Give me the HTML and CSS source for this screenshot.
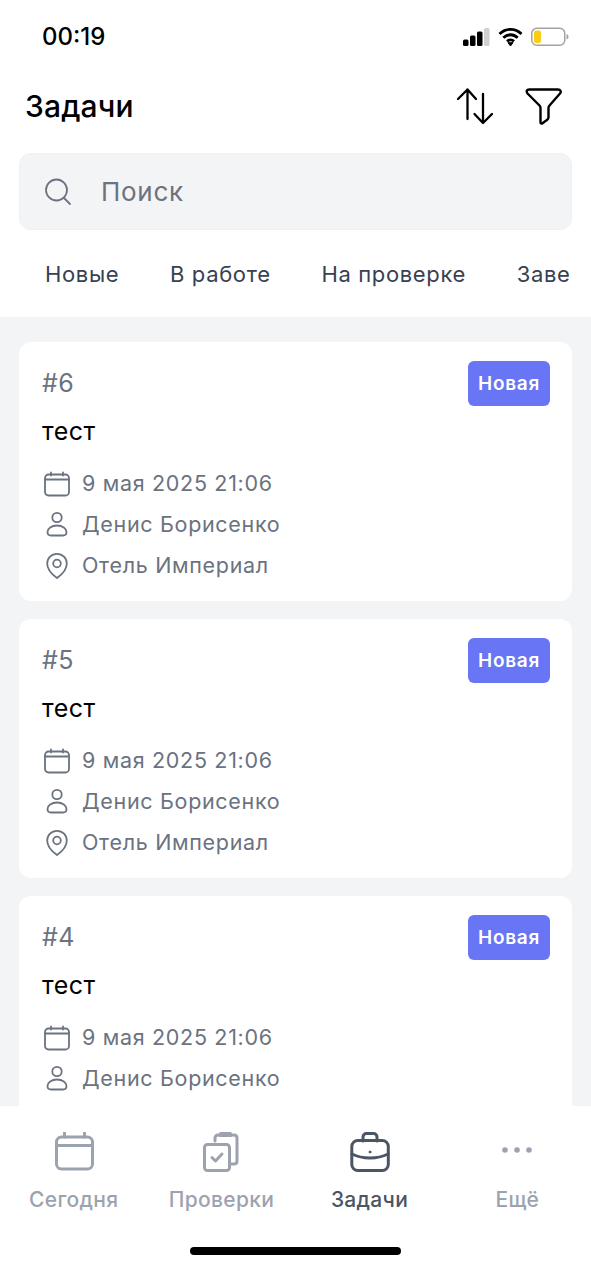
FILE: index.html
```html
<!DOCTYPE html>
<html lang="ru">
<head>
<meta charset="utf-8">
<title>Задачи</title>
<link rel="stylesheet" href="styles.css">
</head>
<body>
<div class="app">
  <header class="top">
    <div class="status">
      <span class="time">00:19</span>
      <div class="status-icons">
        <svg width="27" height="20" viewBox="0 0 27 20"><rect x="0" y="12.500" width="5.500" height="6.500" rx="1.500" fill="#000"/><rect x="7" y="8.500" width="5.500" height="10.500" rx="1.500" fill="#000"/><rect x="14" y="4.500" width="5.500" height="14.500" rx="1.500" fill="#000"/><rect x="21" y="1" width="5.500" height="18" rx="1.500" fill="#d0d0d0"/></svg>
        <svg width="25" height="20" viewBox="0 0 25 20"><path d="M1.500 7C7.700 .8 17.300 .8 23.500 7M5.300 10.800C9.600 6.800 15.400 6.800 19.700 10.800M9 14.400C11 12.600 14 12.600 16 14.400" fill="none" stroke="#000" stroke-width="2.900"/><path d="M12.500 19l-2.500-3.300h5z" fill="#000" stroke="#000" stroke-width="1"/></svg>
        <svg width="38" height="20" viewBox="0 0 38 20"><rect x=".75" y="1.250" width="33" height="17" rx="5" fill="#fff" stroke="#a3a3a3" stroke-width="1.500"/><rect x="3" y="3.500" width="7" height="12.500" rx="2" fill="#f9cc16"/><path d="M35.500 7c1.300.4 2 1.500 2 2.700s-.7 2.300-2 2.700z" fill="#a3a3a3"/></svg>
      </div>
    </div>
    <div class="titlebar">
      <h1>Задачи</h1>
      <div class="actions">
        <svg width="38" height="38" viewBox="0 0 38 38" fill="none" stroke="#000" stroke-width="2.300" stroke-linecap="round" stroke-linejoin="round"><path d="M11.500 32V2.500M2 12l9.500-9.500L20 12"/><path d="M27 7v29M18.500 27l8.500 9 9-9"/></svg>
        <svg width="38" height="38" viewBox="0 0 38 38" fill="none" stroke="#000" stroke-width="2.400" stroke-linecap="round" stroke-linejoin="round"><path d="M4 2.500h29c2.500 0 3.500 2 2 4L24.500 18.500c-.7.800-1 1.500-1 2.500v9.500c0 1.500-1 2-2 2.800l-4 3c-1 .7-2 .2-2-1V21c0-1-.3-1.700-1-2.500L2.500 6.500C1 4.500 1.800 2.500 4 2.500z"/></svg>
      </div>
    </div>
    <div class="search">
      <svg width="28" height="28" viewBox="0 0 28 28" fill="none" stroke="#6b7280" stroke-width="1.800" stroke-linecap="round"><circle cx="12.500" cy="12" r="10.500"/><path d="M20 20l6 6"/></svg>
      <span class="search-text">Поиск</span>
    </div>
    <nav class="tabs">
      <span class="tab">Новые</span>
      <span class="tab">В работе</span>
      <span class="tab">На проверке</span>
      <span class="tab">Завершённые</span>
    </nav>
  </header>

  <main class="list">
    <article class="card">
      <div class="card-head"><span class="num">#6</span><span class="badge">Новая</span></div>
      <div class="name">тест</div>
      <div class="meta">
        <div class="row"><svg class="ic"><use href="#i-cal"/></svg>9 мая 2025 21:06</div>
        <div class="row"><svg class="ic"><use href="#i-user"/></svg>Денис Борисенко</div>
        <div class="row"><svg class="ic"><use href="#i-pin"/></svg>Отель Империал</div>
      </div>
    </article>
    <article class="card">
      <div class="card-head"><span class="num">#5</span><span class="badge">Новая</span></div>
      <div class="name">тест</div>
      <div class="meta">
        <div class="row"><svg class="ic"><use href="#i-cal"/></svg>9 мая 2025 21:06</div>
        <div class="row"><svg class="ic"><use href="#i-user"/></svg>Денис Борисенко</div>
        <div class="row"><svg class="ic"><use href="#i-pin"/></svg>Отель Империал</div>
      </div>
    </article>
    <article class="card">
      <div class="card-head"><span class="num">#4</span><span class="badge">Новая</span></div>
      <div class="name">тест</div>
      <div class="meta">
        <div class="row"><svg class="ic"><use href="#i-cal"/></svg>9 мая 2025 21:06</div>
        <div class="row"><svg class="ic"><use href="#i-user"/></svg>Денис Борисенко</div>
        <div class="row"><svg class="ic"><use href="#i-pin"/></svg>Отель Империал</div>
      </div>
    </article>
  </main>

  <footer class="bar">
    <div class="nav">
      <div class="item">
        <svg width="40" height="40" viewBox="0 0 40 40" fill="none" stroke="#9ca3af" stroke-width="3" stroke-linecap="round" stroke-linejoin="round"><rect x="2.500" y="5" width="36" height="32" rx="5"/><path d="M2.500 13.500h36M10.500 1v4M30.500 1v4"/></svg>
        <span>Сегодня</span>
      </div>
      <div class="item">
        <svg width="40" height="40" viewBox="0 0 40 40" fill="none" stroke="#9ca3af" stroke-width="3" stroke-linecap="round" stroke-linejoin="round"><path d="M13 9V6c0-1.700 1.300-3 3-3h2c.5-2 2-2.500 4-2.500h3c2 0 3.500.5 4 2.500h3c2 0 3 1.500 3 3v23c0 2-1.500 3-3 3h-4"/><path d="M18 3.500h11"/><rect x="2.500" y="12.500" width="25" height="26" rx="3"/><path d="M10 25.500l3.500 3.500 6.500-7"/></svg>
        <span>Проверки</span>
      </div>
      <div class="item active">
        <svg width="40" height="40" viewBox="0 0 40 40" fill="none" stroke="#4b5563" stroke-width="3" stroke-linecap="round" stroke-linejoin="round"><path d="M13 9V5c0-2 1.500-3.500 3.500-3.500h7c2 0 3.500 1.500 3.500 3.500v4"/><rect x="1.800" y="8.500" width="36.500" height="30" rx="6"/><path d="M2 22c5 2.500 11 4 18 4s13-1.500 18-4"/><circle cx="20" cy="20" r="1" fill="#4b5563" stroke-width="1"/></svg>
        <span>Задачи</span>
      </div>
      <div class="item muted">
        <svg width="40" height="40" viewBox="0 0 40 40" fill="#9ca3af"><circle cx="8" cy="18" r="2.800"/><circle cx="20" cy="18" r="2.800"/><circle cx="32" cy="18" r="2.800"/></svg>
        <span>Ещё</span>
      </div>
    </div>
    <div class="home"></div>
  </footer>
</div>

<svg class="defs" width="0" height="0" aria-hidden="true">
  <symbol id="i-cal" viewBox="0 0 26 28"><g fill="none" stroke="#6b7280" stroke-width="1.800" stroke-linecap="round" stroke-linejoin="round"><rect x="1" y="5.500" width="24" height="21" rx="3.500"/><path d="M1 10.500h24M7 3.500v3M19 3.500v3"/></g></symbol>
  <symbol id="i-user" viewBox="0 0 26 28"><g fill="none" stroke="#6b7280" stroke-width="1.800"><circle cx="13" cy="7.500" r="4.700"/><path d="M13 15.500c-5.500 0-9.500 3-9.500 6.500 0 2.200 1.500 3.500 3.500 3.500h12c2 0 3.500-1.300 3.500-3.500 0-3.500-4-6.500-9.500-6.500z"/></g></symbol>
  <symbol id="i-pin" viewBox="0 0 26 28"><g fill="none" stroke="#6b7280" stroke-width="1.800" stroke-linejoin="round"><path d="M13 2.800C7.500 2.800 3.200 7 3.200 12.500 3.200 18 8 23.500 13 27c5-3.500 9.800-9 9.800-14.500C22.800 7 18.500 2.800 13 2.800z"/><circle cx="13" cy="12.500" r="3.800"/></g></symbol>
</svg>
</body>
</html>
```
FILE: styles.css
```css
* { box-sizing: border-box; }
html, body { margin: 0; padding: 0; height: 100%; }
body { font-family: Inter, "Noto Sans", sans-serif; background: #f3f4f6; overflow: hidden; }
.defs { display: block; height: 0; }
.app { width: 591px; height: 1280px; display: flex; flex-direction: column; overflow: hidden; }

.top { background: #fff; height: 317px; flex: none; display: flex; flex-direction: column; }
.status { height: 72px; padding: 0 22px 0 42px; display: flex; align-items: center; justify-content: space-between; }
.time { font-size: 24px; font-weight: 500; color: #000; }
.status-icons { display: flex; align-items: center; gap: 8px; margin-top: 2px; }

.titlebar { height: 68px; padding: 0 28px 0 25px; display: flex; align-items: center; justify-content: space-between; }
h1 { margin: 0; font-size: 30px; font-weight: 500; color: #000; letter-spacing: .15px; }
.actions { display: flex; gap: 31px; }

.search { margin: 13px 19px 0; height: 77px; flex: none; background: #f3f4f6; border: 1px solid #eef0f2; border-radius: 12px; padding: 0 0 0 24px; display: flex; align-items: center; gap: 29px; }
.search-text { font-size: 26px; color: #6b7280; letter-spacing: .7px; }

.tabs { margin: 18px 21px 0 19px; height: 52px; padding-left: 26px; display: flex; align-items: center; gap: 50.700px; overflow: hidden; white-space: nowrap; }
.tab { font-size: 22px; color: #374151; letter-spacing: .65px; flex: none; }

.list { flex: 1; min-height: 0; overflow: hidden; padding: 25px 19px 0; display: flex; flex-direction: column; gap: 18.500px; }
.card { flex: none; height: 258.500px; background: #fff; border-radius: 12px; padding: 19px 22px 0 23px; }
.card-head { display: flex; justify-content: space-between; align-items: center; height: 45px; }
.num { font-size: 25px; color: #6b7280; letter-spacing: .5px; padding-bottom: 2px; }
.badge { width: 82px; height: 45.500px; background: #6875f5; color: #fff; border-radius: 6px; font-size: 19px; font-weight: 600; letter-spacing: .7px; display: flex; align-items: center; justify-content: center; }
.name { font-size: 25px; color: #000; margin-top: 6.500px; line-height: 36px; letter-spacing: .5px; }
.meta { margin-top: 14px; }
.row { height: 41px; display: flex; align-items: center; gap: 12px; font-size: 21.500px; color: #6b7280; letter-spacing: .68px; }
.ic { width: 26px; height: 28px; flex: none; margin-left: 2px; }

.bar { height: 174px; flex: none; background: #fff; position: relative; z-index: 1; display: flex; flex-direction: column; }
.nav { display: grid; grid-template-columns: 147.500px 148px 148px 147.500px; padding-top: 26px; }
.item { display: flex; flex-direction: column; align-items: center; gap: 15px; font-size: 21px; font-weight: 500; color: #9ca3af; letter-spacing: .3px; }
.item svg { display: block; }
.item.active { color: #4b5563; }
.home { width: 211px; height: 8px; border-radius: 4px; background: #000; margin: 35px auto 0; }
```
